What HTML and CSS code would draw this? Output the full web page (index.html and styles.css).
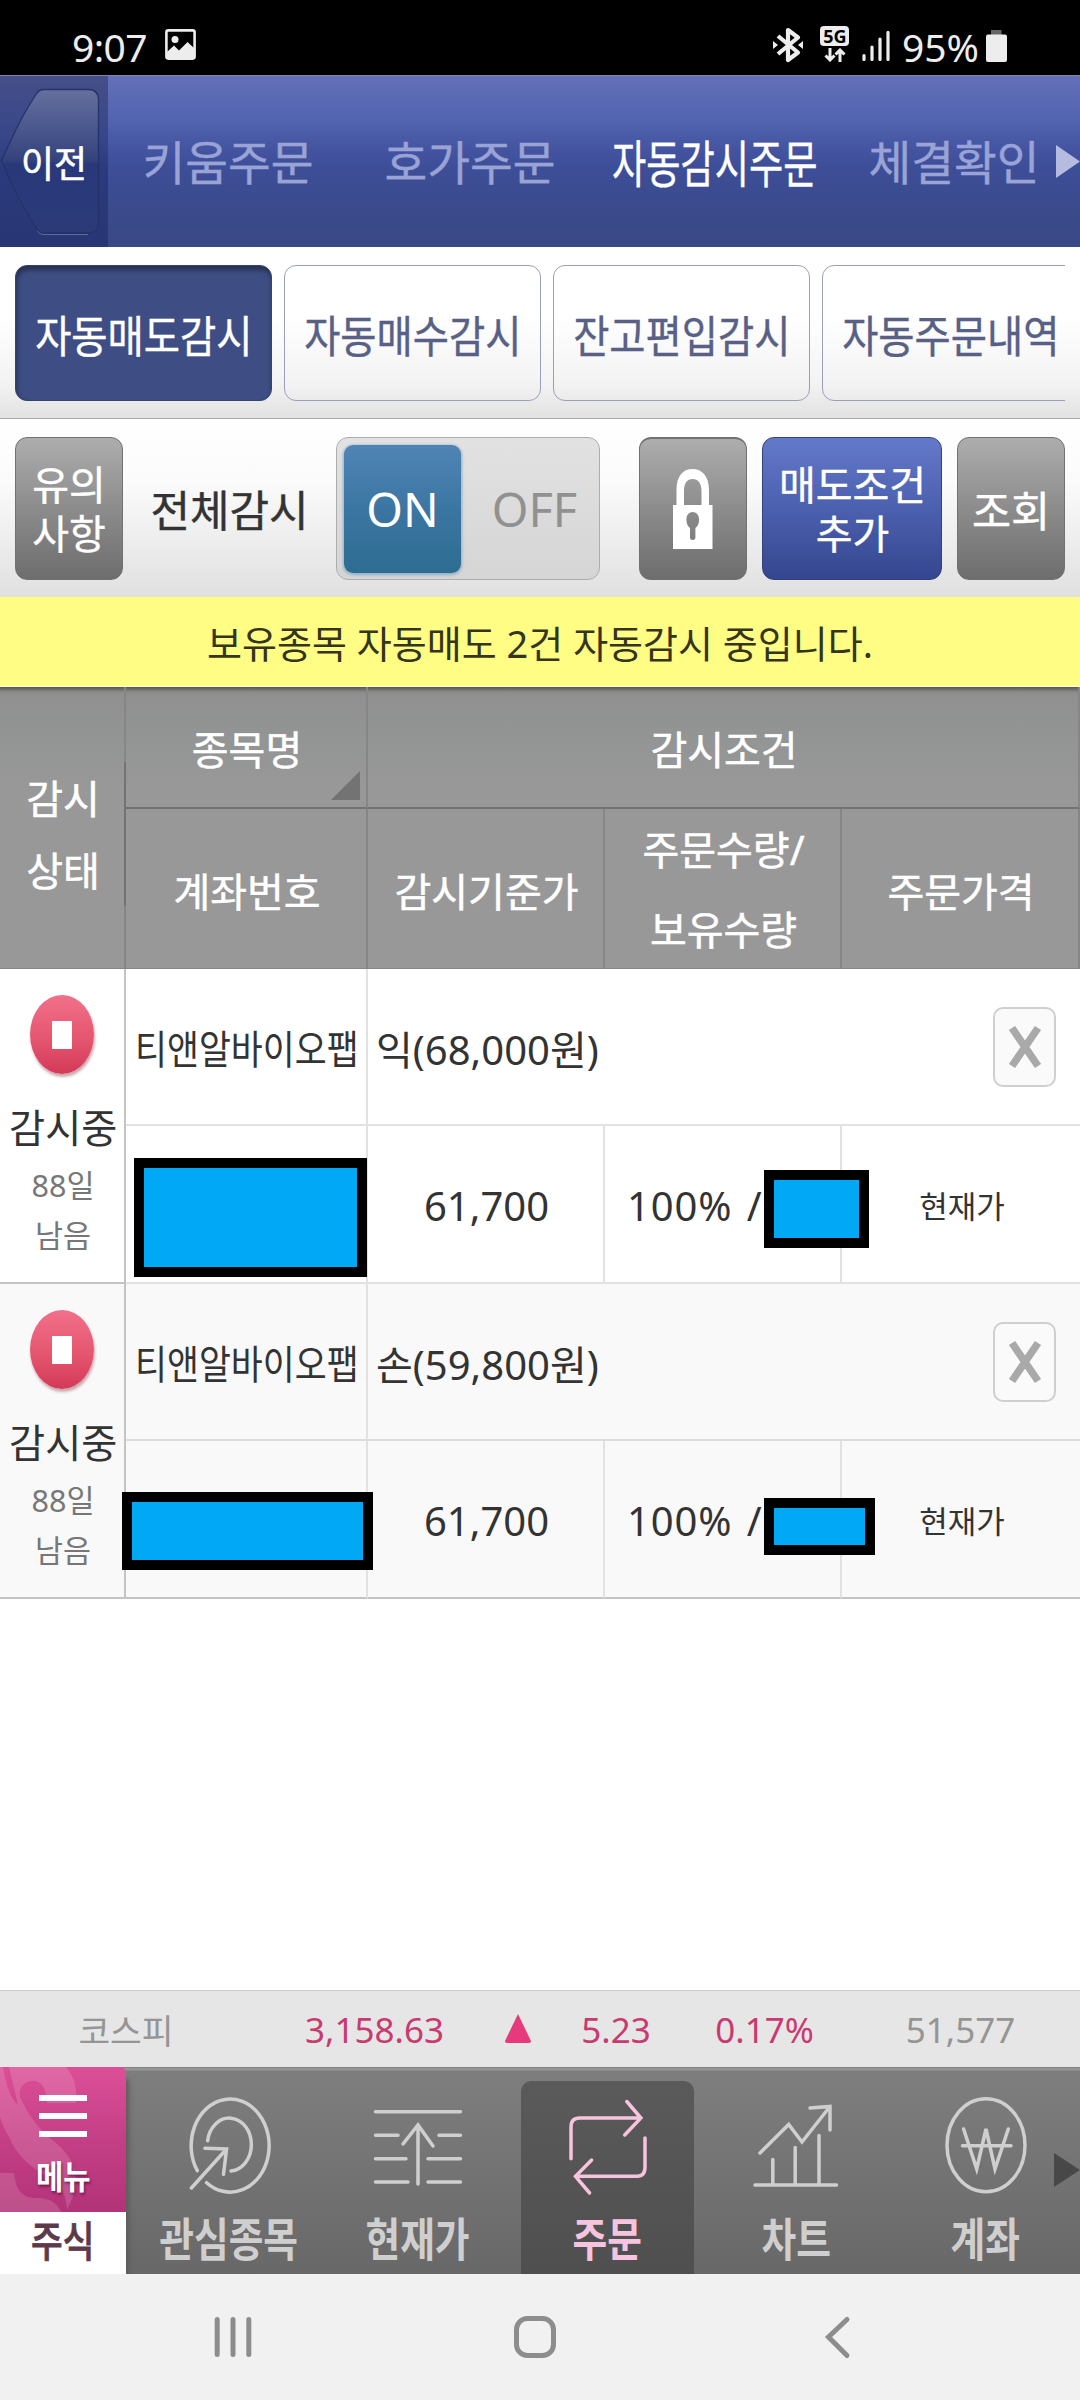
FILE: index.html
```html
<!DOCTYPE html>
<html lang="ko">
<head>
<meta charset="utf-8">
<title>자동감시주문</title>
<link rel="stylesheet" href="styles.css">
</head>
<body>
<div class="app">
  <div class="status">
    <span class="status-time">9:07</span>
    <svg class="ic-photo" width="32" height="32" viewBox="0 0 32 32"><rect x="1.4" y="1.4" width="28.2" height="28.2" rx="2" fill="none" stroke="#ededed" stroke-width="2.6"/><circle cx="10" cy="10.500" r="3.500" fill="#ededed"/><path d="M2 23 L9 16.500 L14 21.500 L22.500 13 L29 19 V29 H2Z" fill="#ededed"/></svg>
    <div class="status-right">
      <svg class="ic-bt" width="30" height="36" viewBox="0 0 30 36"><path d="M5 9 L25 25.500 L15 33 V3 L25 10.500 L5 27" fill="none" stroke="#ededed" stroke-width="4.200" stroke-linejoin="round"/><path d="M0 14 L5 18 L0 22Z M30 14 L25 18 L30 22Z" fill="#ededed"/></svg>
      <div class="net"><span class="net-label">5G</span><svg width="26" height="14" viewBox="0 0 26 14"><path d="M8 0 V12 M3.500 7.500 L8 12 L12.500 7.500 M18 14 V2 M13.500 6.500 L18 2 L22.500 6.500" fill="none" stroke="#ededed" stroke-width="3"/></svg></div>
      <svg class="ic-signal" width="28" height="30" viewBox="0 0 28 30"><path d="M2 24.500 V28.500 M10 16 V28.500 M18 8 V28.500 M26 1.500 V28.500" stroke="#ededed" stroke-width="3.200" stroke-linecap="round"/></svg>
      <span class="status-pct">95%</span>
      <svg width="21" height="32" viewBox="0 0 21 32"><rect x="5" y="0" width="10.500" height="5" fill="#666"/><rect x="0" y="4.500" width="21" height="27.500" rx="2" fill="#ededed"/></svg>
    </div>
  </div>

  <header class="top">
    <div class="back">
      <svg class="back-shape" width="108" height="172" viewBox="0 0 108 172"><defs><linearGradient id="bk" x1="0" y1="0" x2="0" y2="1"><stop offset="0" stop-color="#66709f"/><stop offset=".25" stop-color="#4c598f"/><stop offset=".49" stop-color="#35437d"/><stop offset=".52" stop-color="#28387a"/><stop offset="1" stop-color="#2c3a78"/></linearGradient></defs><path d="M1.500 86 Q20 43 37 18 Q39.500 14.500 43 14.500 H88 Q98.500 14.500 98.500 25 V147 Q98.500 158 88 158 H43 Q39.500 158 37 154 Q20 129 1.500 86Z" fill="url(#bk)" stroke="#26326a" stroke-width="1.300"/><path d="M37 156 Q40 159.500 43 159.500 H88" fill="none" stroke="#5b689c" stroke-width="1"/></svg>
      <span class="back-text sx">이전</span>
    </div>
    <nav class="top-nav">
      <span class="top-item">키움주문</span>
      <span class="top-item">호가주문</span>
      <span class="top-item active"><span class="sx">자동감시주문</span></span>
      <span class="top-item">체결확인</span>
    </nav>
    <svg class="top-more" width="24" height="34" viewBox="0 0 24 34"><path d="M0 0 L24 16.500 L0 33Z" fill="#b6bcdf"/></svg>
  </header>

  <div class="tabs">
    <div class="tab-scroll">
      <div class="tab on"><span class="sx">자동매도감시</span></div>
      <div class="tab"><span class="sx">자동매수감시</span></div>
      <div class="tab"><span class="sx">잔고편입감시</span></div>
      <div class="tab"><span class="sx">자동주문내역</span></div>
    </div>
  </div>

  <div class="tools">
    <div class="btn grey two">유의<br>사항</div>
    <div class="tools-label">전체감시</div>
    <div class="toggle"><div class="toggle-on">ON</div><div class="toggle-off">OFF</div></div>
    <div class="btn grey lock"><svg width="42" height="82" viewBox="0 0 42 82"><path fill="#fff" fill-rule="evenodd" d="M1 37 H4.500 V22 C4.500 8 11 1 20.500 1 C30 1 37 8 37 22 V37 H40.500 V81 H1Z M12 37 H29.500 V23 C29.500 15 26 11 20.700 11 C15 11 12 15 12 23Z M20.700 44 C12.500 44 13 57 18 60 V70 Q18 72 20.700 72 Q23.400 72 23.400 70 V60 C28.500 57 29 44 20.700 44Z"/></svg></div>
    <div class="btn blue two">매도조건<br>추가</div>
    <div class="btn grey one">조회</div>
  </div>

  <div class="notice">보유종목 자동매도 2건 자동감시 중입니다.</div>

  <div class="thead">
    <div class="th state">감시<br>상태</div>
    <div class="th name">종목명<svg class="sort" width="29" height="29" viewBox="0 0 29 29"><path d="M29 0 V29 H0Z" fill="#737373"/></svg></div>
    <div class="th cond">감시조건</div>
    <div class="th">계좌번호</div>
    <div class="th">감시기준가</div>
    <div class="th qty">주문수량/<br>보유수량</div>
    <div class="th">주문가격</div>
  </div>

  <div class="row">
    <div class="td state">
      <div class="stop"></div>
      <div class="watch sx">감시중</div>
      <div class="left">88일<br>남음</div>
    </div>
    <div class="td name"><span class="sx">티앤알바이오팹</span></div>
    <div class="td cond"><span>익(68,000원)</span><div class="close"><svg width="34" height="46" viewBox="0 0 34 46"><path d="M4 4 L30 42 M30 4 L4 42" stroke="#a9a9a9" stroke-width="7.500"/></svg></div></div>
    <div class="td low"></div>
    <div class="td low">61,700</div>
    <div class="td low pct"><span>100% /</span></div>
    <div class="td low price">현재가</div>
    <div class="mask a1"></div><div class="mask b1"></div>
  </div>

  <div class="row alt">
    <div class="td state">
      <div class="stop"></div>
      <div class="watch sx">감시중</div>
      <div class="left">88일<br>남음</div>
    </div>
    <div class="td name"><span class="sx">티앤알바이오팹</span></div>
    <div class="td cond"><span>손(59,800원)</span><div class="close"><svg width="34" height="46" viewBox="0 0 34 46"><path d="M4 4 L30 42 M30 4 L4 42" stroke="#a9a9a9" stroke-width="7.500"/></svg></div></div>
    <div class="td low"></div>
    <div class="td low">61,700</div>
    <div class="td low pct"><span>100% /</span></div>
    <div class="td low price">현재가</div>
    <div class="mask a2"></div><div class="mask b2"></div>
  </div>

  <div class="blank"></div>

  <div class="ticker">
    <span class="mute kospi">코스피</span><span>3,158.63</span>
    <svg width="26" height="30" viewBox="0 0 26 30"><path d="M13 0 L26 27 Q26 29 24 29 H2 Q0 29 0 27Z" fill="#e63a7d"/></svg>
    <span>5.23</span><span>0.17%</span><span class="mute vol">51,577</span>
  </div>

  <nav class="bottom">
    <div class="menu">
      <div class="menu-top">
        <svg class="menu-art" width="126" height="145" viewBox="0 0 126 145"><path d="M9 0 H66 Q78 14 76 36 H47 Q46 12 30 14 Q18 18 20 30 Q34 60 55 75 Q82 98 75 125 L67 143 Q66 120 48 110 Q20 95 10 72 Q2 58 0 50 V0 H3 Q8 30 18 38Z" fill="#fff" opacity=".14"/><path d="M0 106 H14 Q16 131 35 131 Q55 130 61 145 H0Z" fill="#fff" opacity=".14"/></svg>
        <div class="bars"><i></i><i></i><i></i></div>
        <span class="menu-text sx">메뉴</span>
      </div>
      <div class="menu-sub"><span class="sx">주식</span></div>
    </div>
    <div class="items">
      <div class="item">
        <svg width="100" height="110" viewBox="0 0 100 110"><path d="M18.300 80.700 A39 46.500 0 1 1 27.600 92.700 M28.600 50.700 A22 26.500 0 1 1 52 81 M12.400 98 L47.600 59 M25.900 58.300 L47.600 59 L44.500 84.300"/></svg>
        <span class="sx">관심종목</span>
      </div>
      <div class="item">
        <svg width="100" height="110" viewBox="0 0 100 110"><path d="M7.500 21.700 H92.500 M7.500 45.300 H30 M71 45.300 H92.500 M7.500 68.700 H38 M60 68.700 H92.500 M7.500 92 H40 M60 92 H92.500 M50 35 V94 M35 54 L50 35 L65 56"/></svg>
        <span class="sx">현재가</span>
      </div>
      <div class="item active">
        <svg width="100" height="110" viewBox="0 0 100 110"><path d="M14 68.700 V37 Q14 28 22.600 28 H83.900 M69.800 11.500 L83.900 28 L67.700 45 M88 48 V77 Q88 86.300 80 86.300 H18.500 M34.600 70 L18.500 86.300 L32.600 103"/></svg>
        <span class="sx">주문</span>
      </div>
      <div class="item">
        <svg width="100" height="110" viewBox="0 0 100 110"><path d="M9 95 H90.500 M26.800 69.500 V95 M49.200 57.500 V95 M73 45.500 V95 M14 63 L42.700 34.500 L56 52 L84 16.500 M64 18 L84 16.500 V40"/></svg>
        <span class="sx">차트</span>
      </div>
      <div class="item">
        <svg width="100" height="110" viewBox="0 0 100 110"><ellipse cx="50" cy="55.300" rx="39" ry="46.500"/><path d="M27.600 39 L40.700 79 L50 39 L59 79 L72.300 39 M26.500 55.700 H75"/></svg>
        <span class="sx">계좌</span>
      </div>
    </div>
    <svg class="bottom-more" width="26" height="34" viewBox="0 0 26 34"><path d="M0 0 L26 17 L0 34Z" fill="#484848"/></svg>
  </nav>

  <div class="sysnav">
    <svg width="50" height="50" viewBox="0 0 50 50"><path d="M9.200 7.500 V42.500 M25 7.500 V42.500 M40.800 7.500 V42.500"/></svg>
    <svg width="50" height="50" viewBox="0 0 50 50"><rect x="6.500" y="6.500" width="37" height="37" rx="11"/></svg>
    <svg width="50" height="50" viewBox="0 0 50 50"><path d="M35 7.500 L16.500 25 L35 43.500"/></svg>
  </div>
</div>
</body>
</html>
```

FILE: styles.css
```css
* { box-sizing: border-box; }
body {
  margin: 0;
  background: #fff;
  font-family: "Noto Sans", "Noto Sans CJK KR", sans-serif;
  font-size: 40px;
  color: #333;
}
.app {
  width: 1080px;
  height: 2400px;
  display: flex;
  flex-direction: column;
  overflow: hidden;
}
.sx { display: inline-block; white-space: nowrap; }

/* status bar */
.status {
  height: 75px;
  background: #000;
  color: #ededed;
  display: flex;
  align-items: center;
  padding: 18px 73px 0 72px;
  font-size: 39px;
  line-height: 56px;
}
.status-time { letter-spacing: -0.6px; width: 93px; }
.ic-photo { margin-top: -3px; }
.status-right { margin-left: auto; display: flex; align-items: center; }
.ic-bt { margin: -3px 17px 0 0; }
.net { display: flex; flex-direction: column; align-items: center; width: 30px; margin: -5px 12px 0 0; }
.net-label {
  width: 29px; height: 20px; border-radius: 4px;
  background: #ededed; color: #000;
  font-weight: 700; font-size: 18px; line-height: 21px; text-align: center;
  margin-bottom: 2px;
}
.ic-signal { margin: -2px 12px 0 0; }
.status-pct { margin-right: 7px; }
.status-right > svg:last-child { margin-top: -2px; }

/* top navigation */
.top {
  height: 172px;
  position: relative;
  display: flex;
  background: linear-gradient(#6470b8 0%, #5263b0 26%, #4a5ba8 34%, #4353a0 44%, #3d4e98 54%, #3b4a8b 80%, #3a4885 100%);
  border-top: 1px solid #8382ad;
}
.back {
  width: 108px;
  position: relative;
  display: flex;
  align-items: center;
  justify-content: center;
  background: linear-gradient(#454f88, #38468a 35%, #2a3a7c 55%, #293674);
}
.back-shape { position: absolute; left: 0; top: -1px; }
.back-text { position: relative; color: #fff; font-size: 37px; -webkit-text-stroke: .6px #fff; transform: scaleX(.97); }
.top-nav { display: grid; grid-template-columns: repeat(4, 242px); }
.top-item {
  display: flex; align-items: center; justify-content: center;
  color: #99a3d6; font-size: 46.500px; white-space: nowrap; padding: 0 2px 3px 0;
  -webkit-text-stroke: .4px #99a3d6;
}
.top-item.active { color: #fff; font-size: 51px; padding: 0 0 2px 3px; -webkit-text-stroke: .4px #fff; }
.top-item.active .sx { transform: scaleX(.73); }
.top-more { position: absolute; right: 0; top: 69px; }

/* tabs */
.tabs {
  height: 172px;
  padding: 18px 15px 0;
  background: linear-gradient(#fff 40%, #f3f3f4 80%, #e2e2e2);
  border-bottom: 1px solid #a9a9a9;
}
.tab-scroll { display: flex; gap: 12px; overflow: hidden; }
.tab {
  flex: 0 0 257px;
  height: 136px;
  border: 1px solid #9b9fb6;
  border-radius: 12px;
  display: flex; align-items: center; justify-content: center;
  font-size: 44.500px; color: #586185;
  -webkit-text-stroke: .4px currentColor;
}
.tab .sx { transform: scaleX(.885); }
.tab.on {
  background: #3e4e84; color: #fff; border-color: #35436f;
  box-shadow: inset 1px 4px 5px #26304f;
}

/* tools */
.tools {
  height: 178px;
  display: flex;
  padding: 18px 15px 0;
  background: linear-gradient(#fff, #fbfbfb 35%, #e0e0e0);
}
.btn {
  height: 143px; width: 108px; border-radius: 12px;
  color: #fff; text-align: center;
  display: flex; align-items: center; justify-content: center;
  -webkit-text-stroke: .4px currentColor;
}
.grey { background: linear-gradient(#adadad, #8c8c8c 50%, #6d6d6d); border: 1px solid #717171; }
.blue { background: linear-gradient(#6379c9, #4c61b0 48%, #34468e); border: 1px solid #33427f; width: 180px; margin: 0 15px; padding-left: 1px; }
.two { line-height: 49px; padding-top: 1px; }
.one { font-size: 42.500px; }
.tools-label { width: 213px; font-size: 43px; -webkit-text-stroke: .4px currentColor; display: flex; align-items: center; justify-content: center; height: 143px; }
.toggle {
  width: 264px; height: 143px; border: 1px solid #adadad; border-radius: 12px;
  background: linear-gradient(#e2e2e2, #d5d5d5);
  display: flex; padding: 7px; font-size: 47px;
}
.toggle-on {
  width: 117px; height: 128px; border-radius: 9px;
  background: linear-gradient(#5084b6, #3b76a2 50%, #2e6c92);
  box-shadow: 0 1px 3px 1px #8fb0c8;
  color: #fff; display: flex; align-items: center; justify-content: center;
}
.toggle-off { flex: 1; color: #919191; display: flex; align-items: center; justify-content: center; padding: 0 2px 0 18px; }
.lock { margin-left: 39px; border-top-width: 2px; }

.notice {
  height: 90px; background: #fffd84; color: #35351c; border-bottom: 1px solid #fffdd8;
  display: flex; align-items: center; justify-content: center;
  font-size: 38px; padding-bottom: 1px;
}

/* table */
.thead {
  height: 282px;
  display: grid;
  grid-template-columns: 126px 242px 237px 237px 1fr;
  grid-template-rows: 122px 160px;
  background: linear-gradient(#555 0, #8a8a8a 5px, #8f908f 8px, #939494 50px, #989898 100px, #989898 100%);
  color: #fff;
  -webkit-text-stroke: .5px #fff;
  border-bottom: 1px solid #868686;
}
.th {
  border-right: 2px solid #868686;
  display: flex; align-items: center; justify-content: center; text-align: center;
  position: relative;
  padding: 1px 0 0 2px;
}
.th.state { grid-row: 1 / 3; line-height: 72px; padding-top: 13px; }
.th.state::after { content: ""; position: absolute; right: -2px; top: 75px; width: 2px; height: 144px; background: #737373; }
.th.name, .th.cond { border-bottom: 2px solid #737373; }
.th.cond { grid-column: 3 / 6; }
.th.qty { line-height: 80px; padding-top: 1px; }
.sort { position: absolute; right: 6px; bottom: 7px; }

.row {
  height: 315px;
  position: relative;
  display: grid;
  grid-template-columns: 126px 242px 237px 237px 1fr;
  grid-template-rows: 157px 158px;
}
.alt { background: #f9f9f9; }
.td {
  border-right: 2px solid #e2e2e2;
  border-bottom: 2px solid #e2e2e2;
  display: flex; align-items: center; justify-content: center;
  white-space: nowrap;
  padding: 3px 0 0 2px;
}
.td:nth-child(3), .td.price { border-right: 0; }
.td.state {
  grid-row: 1 / 3;
  border-color: #c4c4c4;
  flex-direction: column; justify-content: flex-start;
  padding: 26px 0 0;
}
.stop {
  width: 64px; height: 79px; border-radius: 50%;
  background: linear-gradient(#fff, #fff) center / 20px 28px no-repeat, linear-gradient(#f2708a, #e5566f 55%, #d33a58);
  box-shadow: 1px 3px 3px #c9a5ac;
}
.watch { line-height: 60px; margin: 24px 0 0 2px; transform: scaleX(.98); }
.left { font-size: 30.500px; line-height: 50px; color: #777; text-align: center; margin: 2px 0 0 2px; }
.td.name .sx { transform: scaleX(.868); }
.td.name { padding: 1px 0 0 2px; }
.td.cond { grid-column: 3 / 6; justify-content: space-between; padding: 2px 24px 0 8px; }
.close {
  width: 63px; height: 80px; border: 2px solid #cfcfcf; border-radius: 10px;
  background: #fafafa; display: flex; align-items: center; justify-content: center;
  margin-top: -1px;
}
.td.pct { justify-content: flex-start; padding-left: 22px; letter-spacing: .9px; word-spacing: 3px; }
.td.price { font-size: 31px; padding-top: 1px; }
.alt .td { border-bottom-color: #dcdcdc; }
.alt .td.state, .alt .td.low { border-bottom-color: #c4c4c4; }
.mask { position: absolute; background: #00a8f5; border: 10px solid #000; }
.a1 { left: 134px; top: 189px; width: 233px; height: 119px; }
.b1 { left: 764px; top: 201px; width: 105px; height: 78px; }
.a2 { left: 122px; top: 208px; width: 251px; height: 78px; }
.b2 { left: 764px; top: 214px; width: 111px; height: 57px; }

.blank { flex: 1; }

/* index ticker */
.ticker {
  height: 77px; background: #e6e6e6; border-top: 1px solid #cbcbcb;
  display: grid; grid-template-columns: 252px 245px 42px 154px 143px 244px;
  align-items: center; justify-items: center;
  font-size: 35px; color: #c93a70;
}
.mute { color: #959595; }
.kospi { font-size: 34.500px; }
.vol { padding-left: 5px; }

/* bottom menu */
.bottom {
  height: 207px; display: flex; position: relative;
  background: linear-gradient(#6c6c6c 0, #969696 1px, #969696 3px, #7e7e7e 4px, #686868 100%);
}
.menu { width: 126px; display: flex; flex-direction: column; box-shadow: 3px 12px 5px #5c5c5c; clip-path: inset(0 -12px 0 0); }
.menu-top {
  height: 145px; position: relative;
  background: linear-gradient(#dc4f97, #c43f86 50%, #b33378);
  border-top-right-radius: 6px;
  display: flex; flex-direction: column; align-items: center;
  padding-top: 28px;
}
.menu-art { position: absolute; left: 0; top: 0; }
.bars { position: relative; display: flex; flex-direction: column; gap: 12px; }
.bars i { display: block; width: 48px; height: 6px; background: #fff; }
.menu-text {
  position: relative; color: #fff; font-size: 33px; font-weight: 700; line-height: 40px;
  margin-top: 20px; transform: scaleX(.9); text-shadow: 1px 2px 3px rgba(60, 0, 40, .6);
}
.menu-sub {
  flex: 1; background: #fff; color: #5c3a4c; font-size: 42px; font-weight: 500;
  display: flex; align-items: center; justify-content: center; padding-bottom: 4px;
  -webkit-text-stroke: .8px currentColor;
}
.menu-sub .sx { transform: scaleX(.82); line-height: 50px; }
.items { display: grid; grid-template-columns: repeat(5, 173px); column-gap: 16.300px; padding: 14px 0 0 16px; }
.item {
  display: flex; flex-direction: column; align-items: center;
  color: #cfcfcf; font-size: 46px; font-weight: 700;
  border-radius: 10px 10px 0 0; padding-top: 9px;
}
.item.active { background: linear-gradient(#5a5a5a, #4f4f4f); color: #f6c4de; }
.item svg { fill: none; stroke: currentColor; stroke-width: 3.500; stroke-linecap: round; flex: none; }
.item .sx { line-height: 60px; margin-top: 8px; transform: scaleX(.82); }
.bottom-more { position: absolute; right: 0; top: 86px; }

/* system navigation */
.sysnav { height: 126px; background: #f1f1f1; position: relative; display: flex; padding: 38px 0 0 208px; gap: 252px; }
.sysnav svg { fill: none; stroke: #8d8d8d; stroke-width: 5; stroke-linecap: round; }
```
